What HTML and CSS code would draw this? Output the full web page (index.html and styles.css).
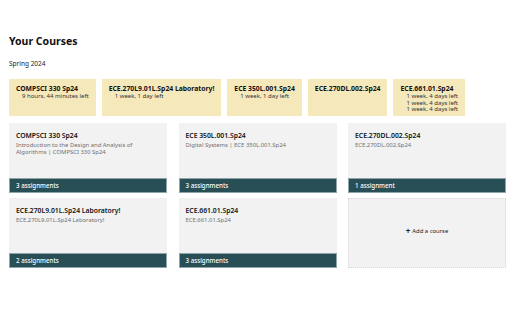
FILE: index.html
```html
<!DOCTYPE html>
<html lang="en">
<head>
    <meta charset="UTF-8">
    <meta name="viewport" content="width=device-width, initial-scale=1.0">
    <title>Your Courses</title>
    <link rel="stylesheet" href="styles.css">
</head>
<body>
    <div class="page">
        <h1>Your Courses</h1>
        <p class="term">Spring 2024</p>

        <!-- Upcoming deadlines -->
        <div class="upcoming">
            <div class="due">
                <div class="due-title">COMPSCI 330 Sp24</div>
                <div class="due-left">9 hours, 44 minutes left</div>
            </div>
            <div class="due">
                <div class="due-title">ECE.270L9.01L.Sp24 Laboratory!</div>
                <div class="due-left">1 week, 1 day left</div>
            </div>
            <div class="due">
                <div class="due-title">ECE 350L.001.Sp24</div>
                <div class="due-left centered">1 week, 1 day left</div>
            </div>
            <div class="due">
                <div class="due-title">ECE.270DL.002.Sp24</div>
            </div>
            <div class="due">
                <div class="due-title">ECE.661.01.Sp24</div>
                <div class="due-left">1 week, 4 days left</div>
                <div class="due-left">1 week, 4 days left</div>
                <div class="due-left">1 week, 4 days left</div>
            </div>
        </div>

        <!-- Course cards -->
        <div class="courses">
            <div class="course">
                <div class="course-body">
                    <div class="course-name">COMPSCI 330 Sp24</div>
                    <div class="course-desc">Introduction to the Design and Analysis of Algorithms | COMPSCI 330 Sp24</div>
                </div>
                <div class="course-foot">3 assignments</div>
            </div>
            <div class="course">
                <div class="course-body">
                    <div class="course-name">ECE 350L.001.Sp24</div>
                    <div class="course-desc">Digital Systems | ECE 350L.001.Sp24</div>
                </div>
                <div class="course-foot">3 assignments</div>
            </div>
            <div class="course">
                <div class="course-body">
                    <div class="course-name">ECE.270DL.002.Sp24</div>
                    <div class="course-desc">ECE.270DL.002.Sp24</div>
                </div>
                <div class="course-foot">1 assignment</div>
            </div>
            <div class="course">
                <div class="course-body">
                    <div class="course-name">ECE.270L9.01L.Sp24 Laboratory!</div>
                    <div class="course-desc">ECE.270L9.01L.Sp24 Laboratory!</div>
                </div>
                <div class="course-foot">2 assignments</div>
            </div>
            <div class="course">
                <div class="course-body">
                    <div class="course-name">ECE.661.01.Sp24</div>
                    <div class="course-desc">ECE.661.01.Sp24</div>
                </div>
                <div class="course-foot">3 assignments</div>
            </div>
            <div class="course add-course">
                <span class="plus">+</span> Add a course
            </div>
        </div>
    </div>
</body>
</html>
```

FILE: styles.css
```css
body {
    margin: 0;
    font-family: "Noto Sans", "Open Sans", sans-serif;
    color: #111;
    background: #fff;
}
.page {
    padding: 34px 6px 0 9px;
}
h1 {
    margin: 0;
    font-size: 10.5px;
    line-height: 14px;
    font-weight: 700;
}
.term {
    margin: 11px 0 0;
    font-size: 6.5px;
    line-height: 9px;
    color: #222;
}
.upcoming {
    display: flex;
    gap: 6px;
    margin-top: 11px;
}
.due {
    background: #f5e8bb;
    padding: 6px 7px 3px;
    min-height: 28px;
}
.due-title {
    font-size: 6.8px;
    line-height: 8px;
    font-weight: 700;
}
.due-left {
    font-size: 6px;
    line-height: 6.6px;
    color: #333;
    padding-left: 6px;
}
.due-left.centered {
    padding-left: 0;
    text-align: center;
}
.courses {
    display: grid;
    grid-template-columns: repeat(3, 1fr);
    column-gap: 11.5px;
    row-gap: 5px;
    width: 497px;
    margin-top: 7px;
}
.course {
    background: #f2f2f2;
    height: 70px;
    display: flex;
    flex-direction: column;
}
.course-body {
    flex: 1;
    padding: 8px 7px 0;
}
.course-name {
    font-size: 6.8px;
    line-height: 9px;
    font-weight: 600;
}
.course-desc {
    margin-top: 2px;
    font-size: 5.9px;
    line-height: 7px;
    color: #707070;
}
.course-foot {
    height: 13px;
    line-height: 13px;
    background: #284e56;
    border: 1px solid #8ea6aa;
    color: #fff;
    font-size: 6.2px;
    font-weight: 500;
    padding-left: 6px;
}
.add-course {
    box-sizing: border-box;
    border: 1px dotted #d6d6d6;
    align-items: center;
    justify-content: center;
    flex-direction: row;
    font-size: 5.9px;
    color: #222;
    padding-bottom: 4px;
}
.plus {
    font-weight: 700;
    font-size: 8px;
    margin-right: 2px;
    line-height: 1;
}
```
